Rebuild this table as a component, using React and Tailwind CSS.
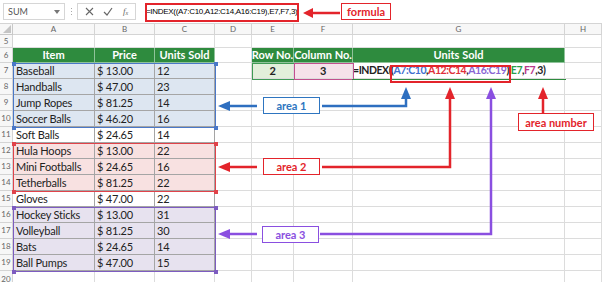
import clsx from 'clsx';

const COLS = 'grid grid-cols-[13px_82px_60px_60px_37px_42px_59px_212px_37px]';
const FONT = { fontFamily: 'Lato, "Liberation Sans", sans-serif' };

const rows = [
  { n: 7, item: 'Baseball', price: '13.00', units: '12', fill: 'bg-[#dde6f1]' },
  { n: 8, item: 'Handballs', price: '47.00', units: '23', fill: 'bg-[#dde6f1]' },
  { n: 9, item: 'Jump Ropes', price: '81.25', units: '14', fill: 'bg-[#dde6f1]' },
  { n: 10, item: 'Soccer Balls', price: '46.20', units: '16', fill: 'bg-[#dde6f1]' },
  { n: 11, item: 'Soft Balls', price: '24.65', units: '14', fill: 'bg-white' },
  { n: 12, item: 'Hula Hoops', price: '13.00', units: '22', fill: 'bg-[#f8e1e1]' },
  { n: 13, item: 'Mini Footballs', price: '24.65', units: '16', fill: 'bg-[#f8e1e1]' },
  { n: 14, item: 'Tetherballs', price: '81.25', units: '22', fill: 'bg-[#f8e1e1]' },
  { n: 15, item: 'Gloves', price: '47.00', units: '22', fill: 'bg-white' },
  { n: 16, item: 'Hockey Sticks', price: '13.00', units: '31', fill: 'bg-[#e7e2ef]' },
  { n: 17, item: 'Volleyball', price: '81.25', units: '30', fill: 'bg-[#e7e2ef]' },
  { n: 18, item: 'Bats', price: '24.65', units: '14', fill: 'bg-[#e7e2ef]' },
  { n: 19, item: 'Ball Pumps', price: '47.00', units: '15', fill: 'bg-[#e7e2ef]' },
];

function RowNum({ n }) {
  return (
    <div className="flex items-center justify-center bg-[#f7f7f7] border-r border-b border-[#d4d4d4] text-[8px] text-[#666] tracking-normal">
      {n}
    </div>
  );
}

function Cell({ className, children }) {
  return (
    <div className={clsx('border-r border-b overflow-hidden whitespace-nowrap', className)}>
      {children}
    </div>
  );
}

function FormulaBar() {
  return (
    <div className="flex items-center h-[24px] bg-white border-b border-[#d4d4d4] text-[#555]">
      <div className="ml-[3px] w-[62px] h-[17px] border border-[#d6d6d6] flex items-center justify-between px-[4px] text-[9px]">
        <span>SUM</span>
        <svg width="6" height="4" viewBox="0 0 6 4"><path d="M0 0h6L3 4z" fill="#777" /></svg>
      </div>
      <div className="w-[12px] flex flex-col items-center gap-[2px]">
        <span className="w-[1px] h-[1px] bg-[#aaa]" />
        <span className="w-[1px] h-[1px] bg-[#aaa]" />
        <span className="w-[1px] h-[1px] bg-[#aaa]" />
      </div>
      <div className="w-[59px] h-[17px] border border-[#d6d6d6] flex items-center justify-around px-[2px]">
        <svg width="9" height="9" viewBox="0 0 9 9"><path d="M1 1l7 7M8 1l-7 7" stroke="#666" strokeWidth="1.1" /></svg>
        <svg width="10" height="9" viewBox="0 0 10 9"><path d="M1 5l3 3 5-7" stroke="#666" strokeWidth="1.2" fill="none" /></svg>
        <span className="text-[9px] italic text-[#666]" style={{ fontFamily: '"Liberation Serif", serif' }}>f<sub className="text-[6px]">x</sub></span>
      </div>
      <div className="ml-[4px] flex-1 h-[17px] flex items-center pl-[6px] text-[8px] tracking-[-0.3px] text-black" style={{ fontFamily: '"Liberation Sans", sans-serif' }}>
        =INDEX((A7:C10,A12:C14,A16:C19),E7,F7,3)
      </div>
    </div>
  );
}

function ColumnHeaders() {
  const letters = ['A', 'B', 'C', 'D', 'E', 'F', 'G', 'H'];
  return (
    <div className={clsx(COLS, 'h-[11px] bg-[#f7f7f7] text-[8px] text-[#666]')}>
      <div className="relative border-r border-b border-[#c8c8c8]">
        <svg className="absolute right-[1px] bottom-[1px]" width="8" height="8" viewBox="0 0 8 8"><path d="M8 0v8H0z" fill="#c4c4c4" /></svg>
      </div>
      {letters.map((l) => (
        <div key={l} className="flex items-center justify-center border-r border-b border-[#d4d4d4] leading-none">
          {l}
        </div>
      ))}
    </div>
  );
}

const grid = 'border-[#dcdcdc]';
const tbl = 'border-[#a5a5a5]';
const green = 'bg-[#2e8b3e] text-white font-bold flex items-center justify-center border-[#8fc39a] text-[11px]';

function Handle({ className, color }) {
  return <span className={clsx('absolute w-[4px] h-[4px]', color, className)} />;
}

function AreaBox({ top, height, border, dot }) {
  return (
    <div className={clsx('absolute left-[13px] w-[203px] border-[1.5px]', border)} style={{ top, height }}>
      <Handle className="-left-[2.5px] -top-[2.5px]" color={dot} />
      <Handle className="-right-[2.5px] -top-[2.5px]" color={dot} />
      <Handle className="-left-[2.5px] -bottom-[2.5px]" color={dot} />
      <Handle className="-right-[2.5px] -bottom-[2.5px]" color={dot} />
    </div>
  );
}

function Label({ className, children }) {
  return (
    <div className={clsx('absolute bg-white border-[1.5px] flex items-center justify-center font-bold text-[11px] leading-none', className)}>
      {children}
    </div>
  );
}

export default function App() {
  return (
    <div className="relative w-[602px] h-[282px] overflow-hidden bg-white text-[#222]" style={FONT}>
      <FormulaBar />
      <ColumnHeaders />

      <div className={clsx(COLS, 'h-[13px]')}>
        <RowNum n={5} />
        {Array.from({ length: 8 }).map((_, i) => (
          <Cell key={i} className={grid} />
        ))}
      </div>

      <div className={clsx(COLS, 'h-[15px]')}>
        <RowNum n={6} />
        <Cell className={green}>Item</Cell>
        <Cell className={green}>Price</Cell>
        <Cell className={green}>Units Sold</Cell>
        <Cell className={grid} />
        <Cell className={green}>Row No.</Cell>
        <Cell className={green}>Column No.</Cell>
        <Cell className={green}>Units Sold</Cell>
        <Cell className={grid} />
      </div>

      {rows.map((r) => (
        <div key={r.n} className={clsx(COLS, 'h-[16px] text-[11px] leading-[15px] tracking-[-0.2px]')}>
          <RowNum n={r.n} />
          <Cell className={clsx(tbl, r.fill, 'pl-[3px]')}>{r.item}</Cell>
          <Cell className={clsx(tbl, r.fill, 'pl-[2px]')}>$ {r.price}</Cell>
          <Cell className={clsx(tbl, r.fill, 'pl-[2px]')}>{r.units}</Cell>
          <Cell className={grid} />
          {r.n === 7 ? (
            <>
              <Cell className="bg-[#e2efda] border-[#dcdcdc] font-bold text-center">2</Cell>
              <Cell className="bg-[#f6e2ea] border-[#dcdcdc] font-bold text-center">3</Cell>
              <Cell className="border-[#dcdcdc] font-bold text-[10.5px] tracking-[-0.45px]">
                =INDEX((<span className="text-[#3f6fce]">A7:C10</span>,
                <span className="text-[#e0303a]">A12:C14</span>,
                <span className="text-[#8a66d4]">A16:C19</span>),
                <span className="text-[#2a9d4a]">E7</span>,
                <span className="text-[#b8388a]">F7</span>,3)
              </Cell>
            </>
          ) : (
            <>
              <Cell className={grid} />
              <Cell className={grid} />
              <Cell className={grid} />
            </>
          )}
          <Cell className={grid} />
        </div>
      ))}

      <div className={clsx(COLS, 'h-[16px]')}>
        <RowNum n={20} />
        {Array.from({ length: 8 }).map((_, i) => (
          <Cell key={i} className={grid} />
        ))}
      </div>

      {/* reference outlines */}
      <AreaBox top={63} height={65} border="border-[#4a78c8]" dot="bg-[#4a78c8]" />
      <AreaBox top={143} height={49} border="border-[#e0434a]" dot="bg-[#e0434a]" />
      <AreaBox top={207} height={65} border="border-[#7d5cc0]" dot="bg-[#7d5cc0]" />
      <div className="absolute left-[252px] top-[63px] w-[43px] h-[17px] border border-[#3f9a55]" />
      <div className="absolute left-[294px] top-[63px] w-[60px] h-[17px] border border-[#c2508e]" />
      <div className="absolute left-[352px] top-[63px] w-[214px] h-[17px] border-b-[1.5px] border-[#2e8b3e]" />

      {/* callouts */}
      <div className="absolute left-[145px] top-[3px] w-[154px] h-[19px] border-2 border-[#e3242b]" />
      <div className="absolute left-[390px] top-[65px] w-[121px] h-[18px] border-2 border-[#e3242b]" />

      <svg className="absolute left-0 top-0 pointer-events-none" width="602" height="282" viewBox="0 0 602 282">
        <g strokeWidth="2.5" fill="none">
          <path d="M340 13H311" stroke="#e3242b" />
          <path d="M257 106H228M322 106H406V98" stroke="#2e6fc0" />
          <path d="M257 167H228M322 167H450V98" stroke="#e3242b" />
          <path d="M257 234H228M320 234H491V98" stroke="#8a4fe0" />
          <path d="M543 113V98" stroke="#e3242b" />
        </g>
        <path d="M303 13l10-5v10z" fill="#e3242b" />
        <path d="M218 106l12-5v10z" fill="#2e6fc0" />
        <path d="M406 87l-5 12h10z" fill="#2e6fc0" />
        <path d="M218 167l12-5v10z" fill="#e3242b" />
        <path d="M450 87l-5 12h10z" fill="#e3242b" />
        <path d="M218 234l12-5v10z" fill="#8a4fe0" />
        <path d="M491 87l-5 12h10z" fill="#8a4fe0" />
        <path d="M543 87l-5 12h10z" fill="#e3242b" />
      </svg>

      <Label className="left-[341px] top-[3px] w-[50px] h-[17px] border-[#e3242b] text-[#e3242b]">formula</Label>
      <Label className="left-[263px] top-[97px] w-[57px] h-[17px] border-[#2e75c0] text-[#2e75c0]">area 1</Label>
      <Label className="left-[263px] top-[158px] w-[57px] h-[17px] border-[#e3242b] text-[#e3242b]">area 2</Label>
      <Label className="left-[262px] top-[226px] w-[57px] h-[17px] border-[#8a4fe0] text-[#8a4fe0]">area 3</Label>
      <Label className="left-[518px] top-[113px] w-[76px] h-[18px] border-[#e3242b] text-[#e3242b]">area number</Label>
    </div>
  );
}
